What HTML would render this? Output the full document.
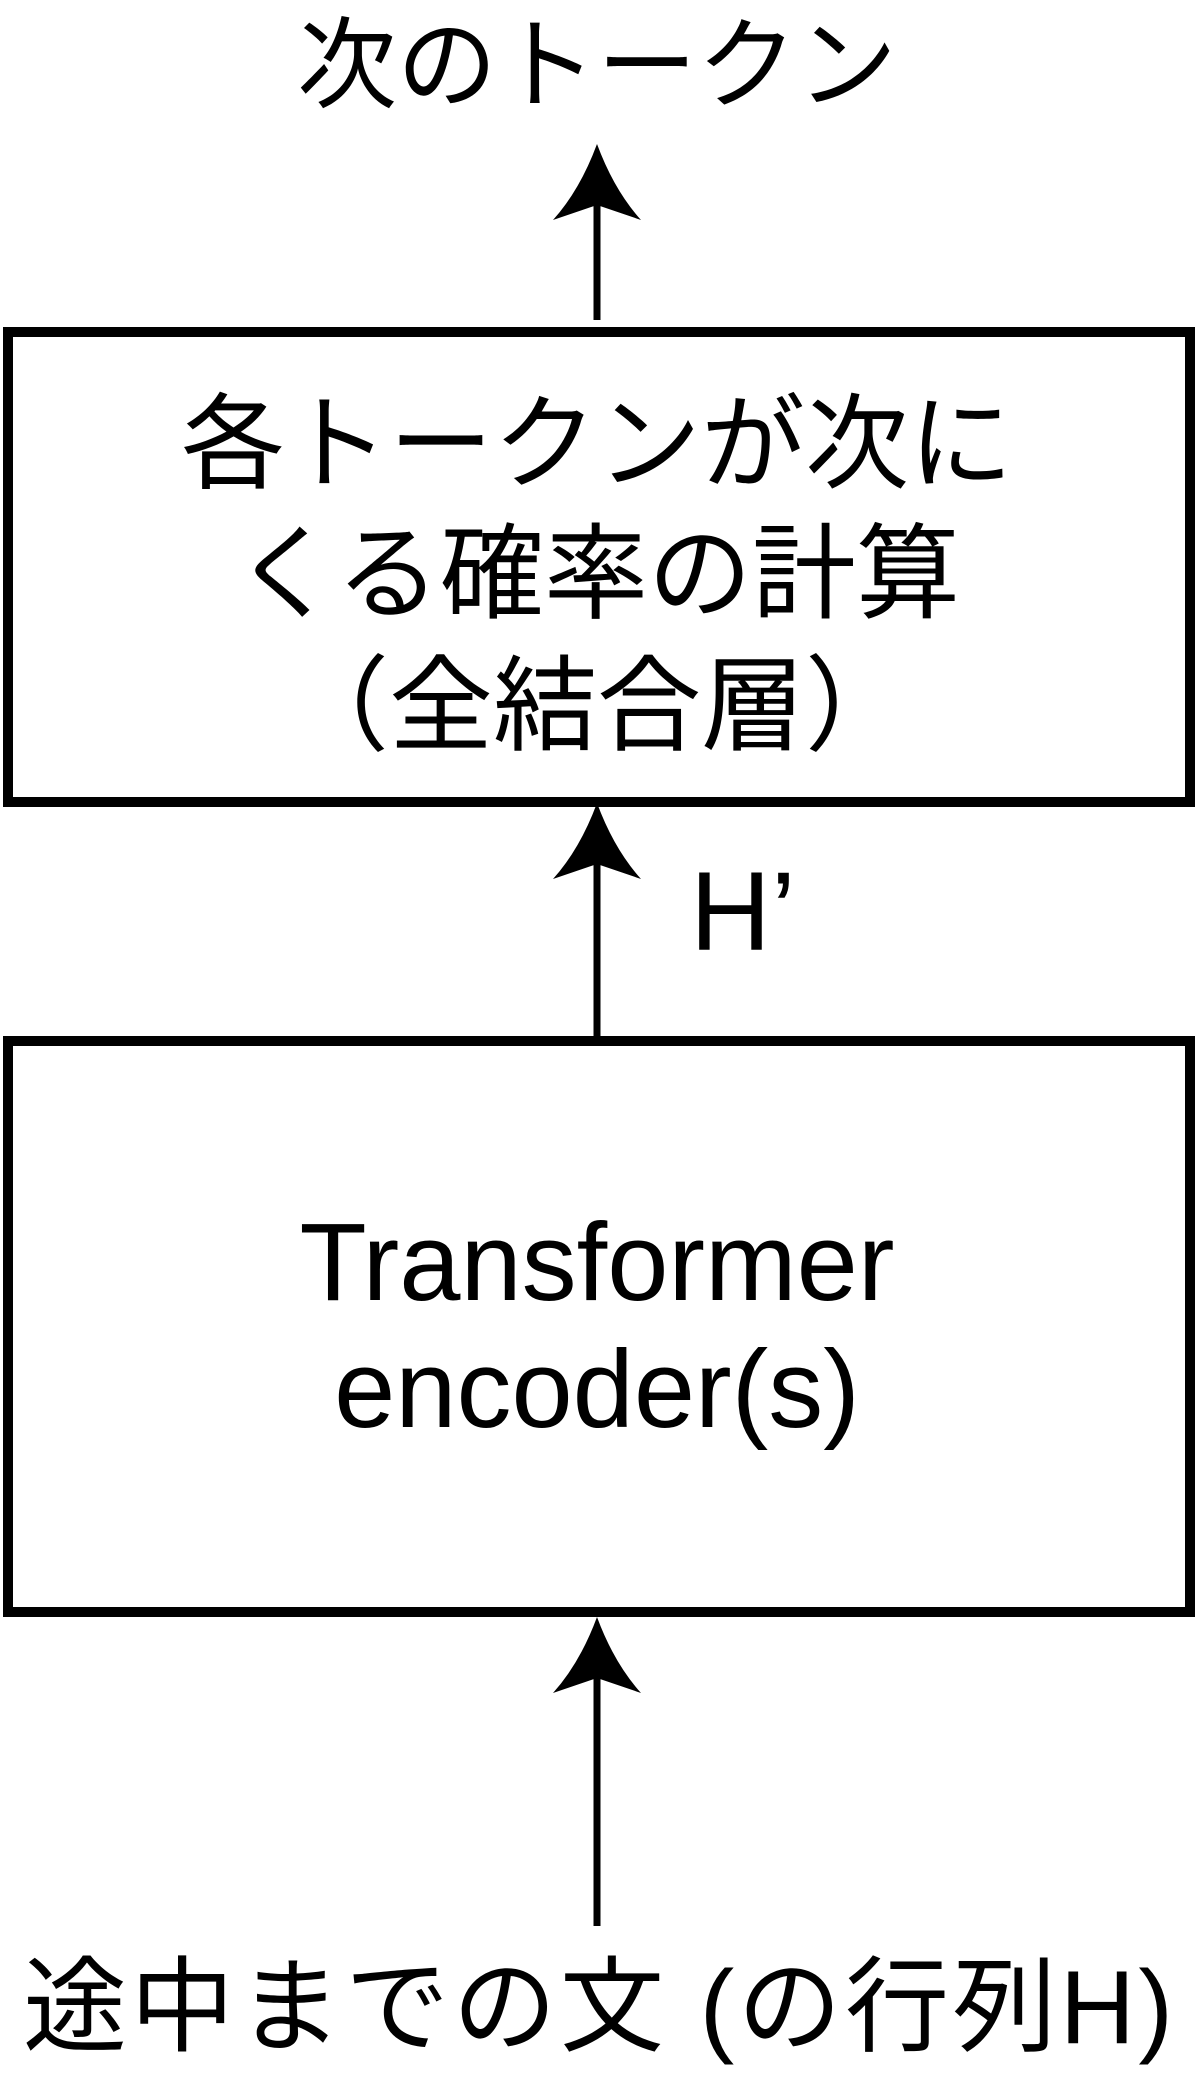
<!DOCTYPE html>
<html><head><meta charset="utf-8"><style>
html,body{margin:0;padding:0;background:#fff;}
svg{display:block}
text{font-family:"Liberation Sans","Noto Sans CJK JP",sans-serif;fill:#000}
</style></head><body>
<svg width="1200" height="2098" viewBox="0 0 1200 2098" xmlns="http://www.w3.org/2000/svg">
<text x="597" y="100" font-size="100" text-anchor="middle">次のトークン</text>
<line x1="597" y1="200" x2="597" y2="320" stroke="#000" stroke-width="7"/>
<path d="M597 144 Q580 190 553 220 L597 205 L641 220 Q614 190 597 144Z" fill="#000"/>
<rect x="8" y="332" width="1182" height="470" fill="none" stroke="#000" stroke-width="10"/>
<text x="597" y="480" font-size="104" text-anchor="middle">各トークンが次に</text>
<text x="597" y="610" font-size="104" text-anchor="middle">くる確率の計算</text>
<text x="597" y="742" font-size="104" text-anchor="middle">（全結合層）</text>
<line x1="597" y1="860" x2="597" y2="1037" stroke="#000" stroke-width="7"/>
<path d="M597 803 Q580 849 553 879 L597 864 L641 879 Q614 849 597 803Z" fill="#000"/>
<text x="690" y="950" font-size="112">H’</text>
<rect x="8" y="1041" width="1182" height="571" fill="none" stroke="#000" stroke-width="10"/>
<text x="597" y="1300" font-size="110" text-anchor="middle">Transformer</text>
<text x="597" y="1427" font-size="110" text-anchor="middle">encoder(s)</text>
<line x1="597" y1="1670" x2="597" y2="1926" stroke="#000" stroke-width="7"/>
<path d="M597 1617 Q580 1663 553 1693 L597 1678 L641 1693 Q614 1663 597 1617Z" fill="#000"/>
<text x="598" y="2043" font-size="104" text-anchor="middle" textLength="1150" lengthAdjust="spacing">途中までの文 (の行列H)</text>
</svg>
</body></html>
